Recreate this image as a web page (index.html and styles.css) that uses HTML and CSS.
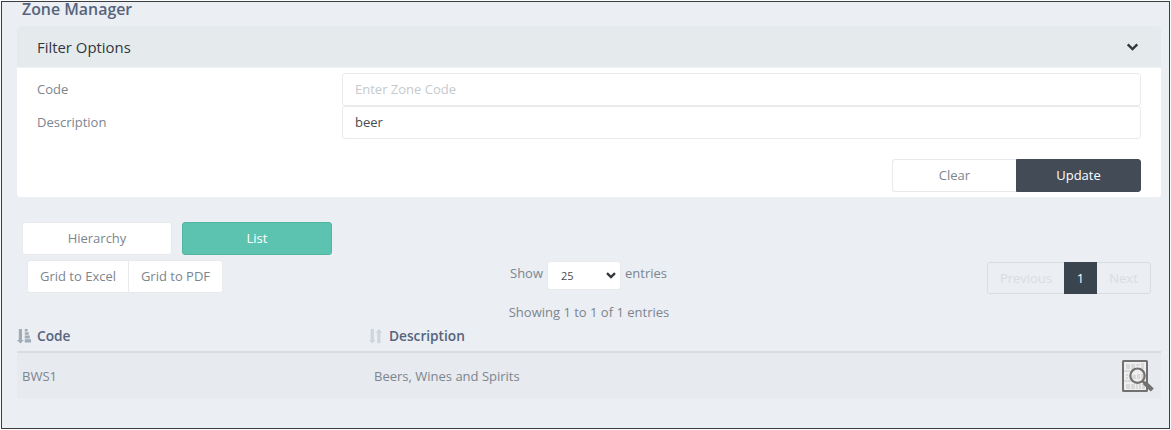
FILE: index.html
```
<!DOCTYPE html>
<html lang="en">
<head>
    <meta charset="UTF-8">
    <meta name="viewport" content="width=device-width, initial-scale=1.0">
    <title>Zone Manager</title>
    <link rel="stylesheet" href="styles.css">
</head>
<body>
    <div class="page">
        <h1>Zone Manager</h1>

        <form class="panel">
            <div class="panel-header">
                <span>Filter Options</span>
                <svg class="chevron" width="13" height="8" viewBox="0 0 13 8"><path d="M1.7 1.4 L6.5 6 L11.3 1.4" /></svg>
            </div>
            <div class="panel-body">
                <div class="form-row">
                    <label for="code">Code</label>
                    <input type="text" id="code" placeholder="Enter Zone Code">
                </div>
                <div class="form-row">
                    <label for="description">Description</label>
                    <input type="text" id="description" value="beer">
                </div>
                <div class="form-actions">
                    <button type="button" class="btn btn-clear">Clear</button>
                    <button type="button" class="btn btn-update">Update</button>
                </div>
            </div>
        </form>

        <div class="views">
            <button class="btn">Hierarchy</button>
            <button class="btn btn-active">List</button>
        </div>

        <div class="toolbar">
            <div class="export">
                <button class="btn">Grid to Excel</button>
                <button class="btn">Grid to PDF</button>
            </div>
            <div class="length">
                <span>Show</span>
                <div class="select">
                    <span>25</span>
                    <svg class="chevron" width="10" height="7" viewBox="0 0 10 7"><path d="M1 1.2 L5 5 L9 1.2" /></svg>
                </div>
                <span>entries</span>
            </div>
            <div class="pagination">
                <span class="prev">Previous</span>
                <span class="current">1</span>
                <span class="next">Next</span>
            </div>
        </div>
        <div class="info">Showing 1 to 1 of 1 entries</div>

        <table>
            <thead>
                <tr>
                    <th class="col-code">
                        <div class="heading">
                            <svg class="sorted" width="15" height="15" viewBox="0 0 15 15">
                                <path d="M1.8 0h3.2v11h1.8L3.4 14.6 0 11h1.8zM7.8 0h2.8v2.4H7.8zM7.8 3.2h4v2.6h-4zM7.8 6.6h5v2.8h-5zM7.8 10.2h6.2v3.3H7.8z" />
                            </svg>
                            <span>Code</span>
                        </div>
                    </th>
                    <th>
                        <div class="heading">
                            <svg class="unsorted" width="15" height="15" viewBox="0 0 15 15">
                                <path d="M1.7 0h3.2v11h1.7L3.3 14.6 0 11h1.7zM8.3 14.2h3.2V3.6h1.7L9.9 0 6.6 3.6h1.7z" />
                            </svg>
                            <span>Description</span>
                        </div>
                    </th>
                    <th class="col-view"></th>
                </tr>
            </thead>
            <tbody>
                <tr>
                    <td>BWS1</td>
                    <td>Beers, Wines and Spirits</td>
                    <td class="col-view">
                        <svg class="view" width="32" height="32" viewBox="0 0 32 32">
                            <rect x="1" y="1" width="24" height="30" rx="0.5" fill="#efefef" stroke="#737170" stroke-width="2" />
                            <path fill="#d8d9da" d="M4 4h4v5H4zM9 4h4v5H9zM14 4h4v2h-4zM19 3h3v6h-3zM2 10h6v2H2zM4 14h2v2H4zM4 17h2v2H4zM2 20h7v2H2zM4 24h4v5H4zM9 24h4v5H9zM14 24h2v5h-2zM17 24h2v5h-2zM20 24h3v5h-3zM15 14h3v5h-3zM19 14h3v5h-3zM10 15h4v4h-4z" />
                            <circle cx="15.5" cy="15.7" r="7.2" fill="none" stroke="#737170" stroke-width="2.2" />
                            <path d="M20.5 21 L23 23.5" stroke="#737170" stroke-width="2.5" />
                            <path d="M22.5 22.7 L30.3 30" stroke="#737170" stroke-width="4.4" />
                        </svg>
                    </td>
                </tr>
            </tbody>
        </table>
    </div>
</body>
</html>
```
FILE: styles.css
```
* {
    box-sizing: border-box;
}

body {
    margin: 0;
    padding: 1px;
    background-color: #fbfbfb;
    font-family: "Open Sans", sans-serif;
    font-size: 13px;
    color: #7c858e;
}

.page {
    width: 1169px;
    height: 428px;
    padding: 0 8px 0 15px;
    border: 1px solid #3b3e42;
    background-color: #ebeef3;
}

h1 {
    margin: 0 0 10px 5px;
    font-size: 15.9px;
    line-height: 14px;
    font-weight: 600;
    color: #56647d;
}

.panel {
    height: 171px;
    border-radius: 3px;
    background-color: #fff;
    overflow: hidden;
}

.panel-header {
    display: flex;
    justify-content: space-between;
    align-items: center;
    height: 42px;
    padding: 0 22px 0 20px;
    border-bottom: 1px solid #f0f3f4;
    background-color: #e5ebed;
    font-size: 14.9px;
    color: #33373b;
}

.chevron {
    fill: none;
    stroke: #33373b;
    stroke-width: 2.4;
}

.panel-body {
    padding: 5px 20px;
}

.form-row {
    display: flex;
    align-items: center;
}

.form-row label {
    width: 305px;
    padding-bottom: 2px;
}

input {
    flex: 1;
    height: 33px;
    padding: 0 12px 2px;
    border: 1px solid #e9ebec;
    border-radius: 3px;
    font: inherit;
    color: #484b4f;
}

input::placeholder {
    color: #c6cacd;
}

.btn {
    height: 33px;
    padding: 0 0 2px;
    border: 1px solid #e8eaec;
    border-radius: 3px;
    background-color: #fff;
    font: inherit;
    color: #7c858e;
}

.form-actions {
    display: flex;
    justify-content: flex-end;
    margin-top: 20px;
}

.form-actions .btn {
    width: 125px;
}

.form-actions .btn-clear {
    width: 124px;
    border-right: none;
    border-radius: 3px 0 0 3px;
}

.form-actions .btn-update {
    border-color: #424b56;
    border-radius: 0 3px 3px 0;
    background-color: #424b56;
    color: #fff;
}

.views {
    display: flex;
    gap: 10px;
    margin: 25px 0 0 5px;
}

.views .btn {
    width: 150px;
}

.views .btn-active {
    border-color: #53b5a1;
    background-color: #5dc3b1;
    color: #fff;
}

.toolbar {
    display: grid;
    grid-template-columns: 1fr 158px 1fr;
    align-items: start;
    height: 41px;
    margin-top: 5px;
    padding: 0 10px;
}

.export {
    display: flex;
}

.export .btn {
    width: 101px;
    height: 33px;
    border-radius: 3px 0 0 3px;
    border-right: none;
}

.export .btn + .btn {
    width: 95px;
    border-right: 1px solid #e8eaec;
    border-radius: 0 3px 3px 0;
}

.length {
    display: flex;
    margin-top: 1px;
    line-height: 25px;
}

.select {
    display: flex;
    justify-content: space-between;
    align-items: center;
    width: 74px;
    height: 29px;
    margin: 0 4px;
    padding: 0 4px 1px 13px;
    border: 1px solid #e8eaec;
    border-radius: 3px;
    background-color: #fff;
    font-size: 11px;
    color: #484b4f;
}

.pagination {
    display: flex;
    justify-self: end;
    height: 32px;
    margin-top: 2px;
    border: 1px solid #dadddf;
    border-radius: 3px;
    line-height: 31px;
    text-align: center;
    color: #dadddf;
}

.prev {
    width: 76px;
}

.current {
    width: 33px;
    margin: -1px 0;
    line-height: 33px;
    background-color: #3a444e;
    color: #fff;
}

.next {
    width: 53px;
}

.info {
    height: 18px;
    margin: 2px 0 6px;
    line-height: 18px;
    text-align: center;
}

table {
    width: 100%;
    border-collapse: collapse;
    table-layout: fixed;
}

th {
    height: 24px;
    padding: 0 0 6px;
    border-bottom: 2px solid #d9dde1;
    font-size: 13.7px;
    font-weight: 600;
    text-align: left;
    color: #56647d;
}

.col-code {
    width: 352px;
}

.heading {
    display: flex;
    align-items: center;
    gap: 5px;
    line-height: 18px;
}

.sorted {
    fill: #a0abba;
}

.unsorted {
    fill: #ced5df;
}

td {
    height: 46px;
    padding: 0 5px;
    background-color: #e7eaee;
}

.col-view {
    width: 50px;
}

td.col-view {
    padding: 0 7px 0 11px;
}

.view {
    display: block;
}
```
